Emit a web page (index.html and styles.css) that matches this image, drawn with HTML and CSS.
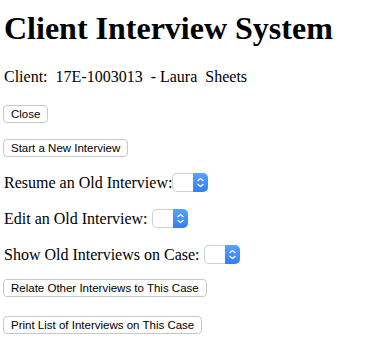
FILE: index.html
```html
<!DOCTYPE html>
<html lang="en">
<head>
  <meta charset="UTF-8">
  <title>Client Interview System</title>
  <link rel="stylesheet" href="styles.css">
</head>
<body>

<h1>Client Interview System</h1>

<p class="client">Client:&nbsp; 17E-1003013 &nbsp;- Laura&nbsp; Sheets</p>

<p class="row"><button type="button">Close</button></p>

<p class="row"><button type="button">Start a New Interview</button></p>

<p class="row pick">Resume an Old Interview:<span class="picker"><span class="picker-box"></span><span class="picker-arrow"><svg width="9" height="11" viewBox="0 0 9 11"><path d="M1.5 4 L4.5 1.5 L7.5 4 M1.5 7 L4.5 9.5 L7.5 7" fill="none" stroke="#fff" stroke-width="1.3"/></svg></span></span></p>

<p class="row pick">Edit an Old Interview: <span class="picker"><span class="picker-box"></span><span class="picker-arrow"><svg width="9" height="11" viewBox="0 0 9 11"><path d="M1.5 4 L4.5 1.5 L7.5 4 M1.5 7 L4.5 9.5 L7.5 7" fill="none" stroke="#fff" stroke-width="1.3"/></svg></span></span></p>

<p class="row pick last-pick">Show Old Interviews on Case: <span class="picker"><span class="picker-box"></span><span class="picker-arrow"><svg width="9" height="11" viewBox="0 0 9 11"><path d="M1.5 4 L4.5 1.5 L7.5 4 M1.5 7 L4.5 9.5 L7.5 7" fill="none" stroke="#fff" stroke-width="1.3"/></svg></span></span></p>

<p class="row relate"><button type="button">Relate Other Interviews to This Case</button></p>

<p class="row"><button type="button">Print List of Interviews on This Case</button></p>

</body>
</html>
```

FILE: styles.css
```css
body {
  font-family: "Liberation Serif", "Times New Roman", serif;
  font-size: 16px;
  color: #000;
  background: #fff;
  margin: 0;
  padding: 0 4px;
}
h1 {
  font-size: 32px;
  font-weight: bold;
  line-height: 37px;
  margin: 10px 0 21px;
}
p {
  margin: 0 0 16px;
}
.client {
  line-height: 18px;
  margin-bottom: 19px;
}
.row {
  height: 18px;
  line-height: 18px;
}
.pick {
  height: 20px;
  line-height: 20px;
}
.last-pick {
  margin-bottom: 14px;
}
.relate {
  margin-bottom: 19px;
}
button {
  font-family: "Liberation Sans", Arial, sans-serif;
  font-size: 11.5px;
  color: #000;
  background: #fff;
  border: 1px solid #c8c8c8;
  border-radius: 4px;
  padding: 0 7px;
  height: 18px;
  margin: 0 0 0 -1px;
  vertical-align: top;
}
.picker {
  display: inline-flex;
  vertical-align: top;
  height: 19px;
  width: 36px;
  border-radius: 5px;
  overflow: hidden;
  box-shadow: 0 0 0 1px #d0d0d0 inset;
}
.picker-box {
  flex: 1;
}
.picker-arrow {
  width: 15px;
  background: linear-gradient(#5aa2fd, #2f7ff7);
  display: flex;
  align-items: center;
  justify-content: center;
}
```
